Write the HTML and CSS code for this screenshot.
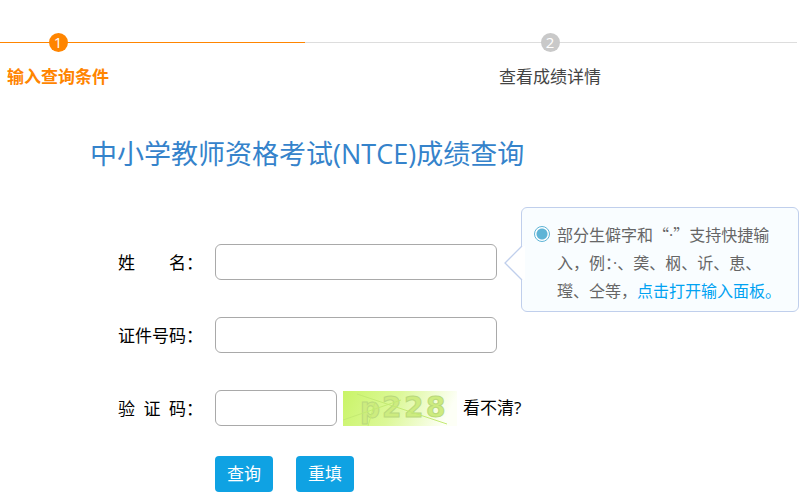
FILE: index.html
```html
<!DOCTYPE html>
<html lang="zh-CN">
<head>
<meta charset="utf-8">
<title>中小学教师资格考试(NTCE)成绩查询</title>
<link rel="stylesheet" href="styles.css">
</head>
<body>
<ol class="steps">
  <li class="step step-current"><span class="step-number">1</span><span>输入查询条件</span></li>
  <li class="step"><span class="step-number">2</span><span>查看成绩详情</span></li>
</ol>
<main class="query">
  <h1 class="title">中小学教师资格考试(NTCE)成绩查询</h1>
  <form class="form">
    <div class="row">
      <label class="label" for="name"><span class="label-text">姓 名</span>：</label>
      <div class="field">
        <input class="input" id="name" type="text">
        <div class="tip">
          <svg class="tip-arrow" viewBox="0 0 21 36" aria-hidden="true">
            <path d="M18 1 1 18l17 17h3V1z" fill="#fff"/>
            <path d="M18 1 1 18l17 17" fill="none" stroke="#c0cfec" stroke-width="1.3"/>
          </svg>
          <input class="tip-radio" type="radio" checked aria-label="快捷输入">
          <p class="tip-text">部分生僻字和<span class="wide">“</span>·<span class="wide">”</span>支持快捷输入，例：·、䶮、㭎、䜣、恵、㼆、仝等，<a class="tip-link" href="#panel">点击打开输入面板。</a></p>
        </div>
      </div>
    </div>
    <div class="row">
      <label class="label" for="idno"><span class="label-text">证件号码</span>：</label>
      <div class="field"><input class="input" id="idno" type="text"></div>
    </div>
    <div class="row">
      <label class="label" for="code"><span class="label-text">验 证 码</span>：</label>
      <div class="field captcha">
        <input class="input input-short" id="code" type="text">
        <svg class="captcha-image" viewBox="0 0 114 35" role="img" aria-label="验证码图片">
          <defs>
            <linearGradient id="fade" x1="0" y1="0" x2="1" y2="0.15">
              <stop offset="0" stop-color="#c9f467"/>
              <stop offset="0.5" stop-color="#dcf898"/>
              <stop offset="1" stop-color="#fdfff6"/>
            </linearGradient>
          </defs>
          <rect width="114" height="35" fill="url(#fade)"/>
          <g class="captcha-code">
            <text x="17" y="27">p</text>
            <text x="39" y="26">2</text>
            <text x="61" y="26">2</text>
            <text x="83" y="26">8</text>
          </g>
          <g fill="none" stroke="#c3ea72">
            <path d="M14 3 104 33"/>
            <path d="M0 29 58 9"/>
            <path d="M25 35l7-24"/>
          </g>
        </svg>
        <a class="refresh" href="#code">看不清?</a>
      </div>
    </div>
    <div class="actions">
      <button class="button" type="submit">查询</button>
      <button class="button" type="reset">重填</button>
    </div>
  </form>
</main>
</body>
</html>
```
FILE: styles.css
```css
* {
  box-sizing: border-box;
}

body {
  margin: 0;
  background: #fff;
  color: #000;
  font: 17px/24px "Open Sans", "Noto Sans CJK SC", sans-serif;
}

.steps {
  position: relative;
  display: grid;
  grid-template-columns: 61.35% 1fr;
  justify-items: start;
  margin: 0;
  padding: 33px 0 0;
  list-style: none;
}

.steps::before {
  content: "";
  position: absolute;
  top: 42px;
  left: 0;
  right: 5px;
  height: 1px;
  background: linear-gradient(to right, #ff8500 38.3%, #ddd 38.3%);
}

.step {
  position: relative;
  display: flex;
  flex-direction: column;
  align-items: center;
  gap: 13px;
  padding-left: 7px;
  color: #444;
}

.step-current {
  color: #ff8500;
  font-weight: bold;
}

.step-number {
  width: 19px;
  height: 19px;
  border-radius: 50%;
  background: #c9c9c9;
  color: #fff;
  font-size: 15px;
  font-weight: normal;
  line-height: 19px;
  text-align: center;
}

.step-current .step-number {
  background: #ff8500;
}

.query {
  padding: 45px 0 12px 90px;
}

.title {
  margin: 0;
  color: #3583cb;
  font-size: 27px;
  font-weight: normal;
  line-height: 40px;
}

.form {
  display: flex;
  flex-direction: column;
  gap: 37px;
  padding: 70px 0 0 28px;
}

.row {
  display: flex;
  align-items: center;
}

.label {
  display: flex;
  width: 97px;
  padding-top: 2px;
}

.label-text {
  width: 68px;
  text-align-last: justify;
}

.field {
  position: relative;
  display: flex;
}

.input {
  width: 282px;
  height: 36px;
  padding: 0 10px;
  border: 1px solid #a9a9a9;
  border-radius: 6px;
  background: #fff;
  font: inherit;
}

.input-short {
  width: 122px;
}

.tip {
  position: absolute;
  top: -37px;
  left: calc(100% + 24px);
  display: flex;
  gap: 7px;
  width: 278px;
  padding: 12px 13px 6px 12px;
  border: 1px solid #c0cfec;
  border-radius: 6px;
  background: #f9fdff;
  color: #666;
  font-size: 16px;
  line-height: 28px;
}

.tip-arrow {
  position: absolute;
  top: 37px;
  left: -18px;
  width: 21px;
  height: 36px;
}

.tip-radio {
  flex: none;
  appearance: none;
  width: 16px;
  height: 16px;
  margin: 6px 0 0;
  border: 1px solid #5eb4d6;
  border-radius: 50%;
  background: radial-gradient(circle, #5eb4d6 5px, #fff 6px);
}

.tip-text {
  flex: 1;
  margin: 0;
}

.wide {
  font-family: "Noto Sans CJK SC", sans-serif;
}

.tip-link {
  color: #00a2f2;
  text-decoration: none;
}

.captcha {
  align-items: center;
  gap: 6px;
}

.captcha-image {
  width: 114px;
  height: 35px;
}

.captcha-code {
  fill: #cdec7f;
  stroke: #b9d97c;
  stroke-width: 1px;
  font: bold 28px "DejaVu Sans", sans-serif;
}

.refresh {
  color: #000;
  text-decoration: none;
}

.actions {
  display: flex;
  gap: 23px;
  margin-top: -7px;
  padding-left: 97px;
}

.button {
  height: 36px;
  padding: 0 12px;
  border: 0;
  border-radius: 4px;
  background: #0fa2e3;
  color: #fff;
  font: inherit;
}
```
